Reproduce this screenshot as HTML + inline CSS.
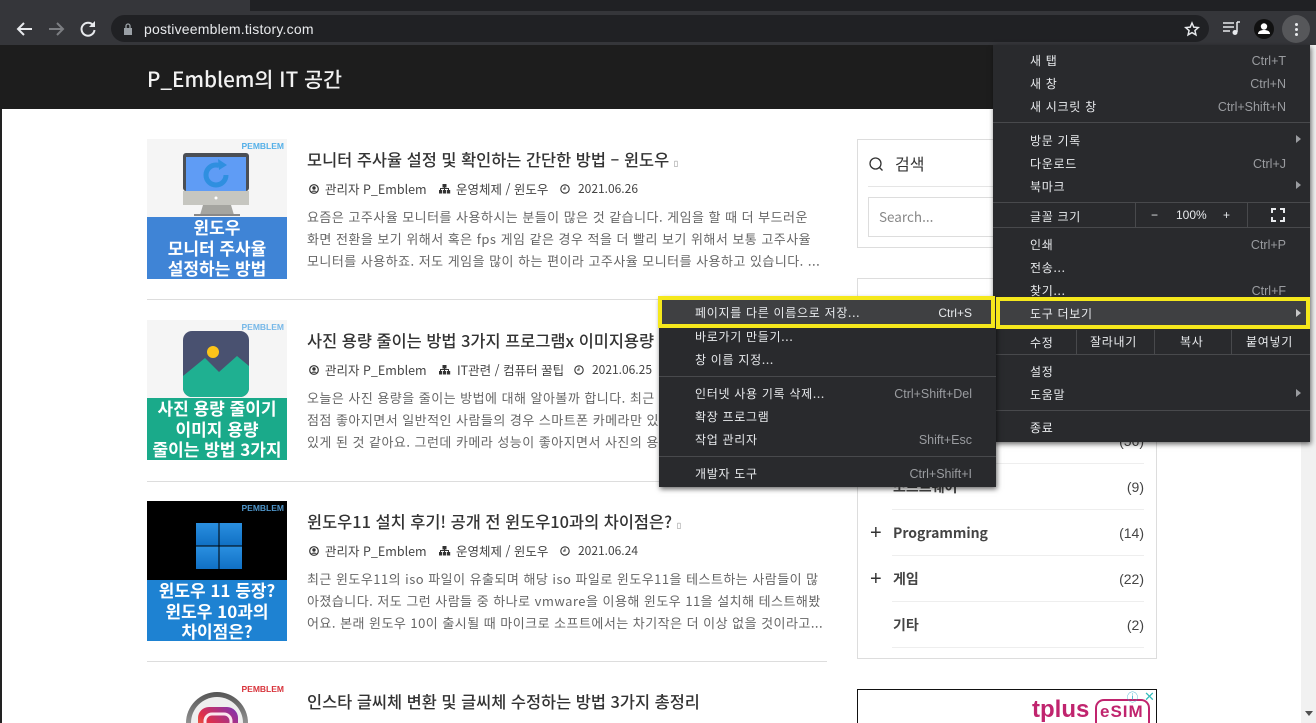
<!DOCTYPE html>
<html lang="ko"><head><meta charset="utf-8"><title>P_Emblem의 IT 공간</title>
<style>
html,body{margin:0;padding:0;width:1316px;height:723px;overflow:hidden;background:#fff}
body{position:relative;font-family:"Liberation Sans","Noto Sans CJK KR",sans-serif;color:#333}
*{box-sizing:border-box}
.a{position:absolute}
.t{position:absolute;white-space:nowrap;line-height:20px;height:20px}
.h{font-family:"Noto Sans CJK KR","Liberation Sans",sans-serif}
.ti{font-size:16.4px;color:#333;font-weight:500;left:307px}
.m{font-size:12.5px;color:#444}
.dt{font-size:12px;color:#444}
.d{font-size:13px;color:#666;left:307px;letter-spacing:.47px}
.r{text-align:right}
.mi{font-size:12px;color:#e8eaed;letter-spacing:.7px}
.sc{font-size:12.5px;color:#9a9ca0;text-align:right}
.sep{position:absolute;height:1px;background:#48494c}
.thumb{position:absolute;left:147px;width:140px;height:140px;overflow:hidden}
.band{position:absolute;left:0;width:140px;overflow:hidden;text-align:center;color:#fff;font-weight:700;font-size:17px;line-height:20.5px;font-family:"Noto Sans CJK KR",sans-serif;white-space:nowrap}
.band div{height:20.5px;line-height:20.5px}
.pb{position:absolute;right:3px;top:2px;font-size:8.5px;font-weight:700;line-height:10px;color:#55b0e8}
.line{position:absolute;left:147px;width:680px;height:1px;background:#ddd}
.cat{position:absolute;left:893px;font-size:14px;font-weight:700;color:#444;line-height:20px;font-family:"Noto Sans CJK KR","Liberation Sans",sans-serif}
.cnt{position:absolute;right:172px;font-size:14px;color:#444;line-height:20px}
.dv{position:absolute;left:892px;width:252px;height:1px;background:#eee}
.tri{position:absolute;left:1296px;width:0;height:0;border-left:5px solid #9a9ca0;border-top:4px solid transparent;border-bottom:4px solid transparent}
</style></head><body>

<!-- browser chrome -->
<div class="a" style="left:0;top:0;width:1316px;height:11px;background:#202124"></div>
<div class="a" style="left:0;top:0;width:250px;height:11px;background:#35363a"></div>
<div class="a" style="left:0;top:11px;width:1316px;height:34px;background:#35363a"></div>
<div class="a" style="left:111px;top:15px;width:1098px;height:27px;border-radius:14px;background:#202124"></div>
<svg class="a" style="left:14px;top:18px" width="85" height="22" viewBox="0 0 85 22" fill="none">
<path d="M18 11H4M10 5l-6 6 6 6" stroke="#e8eaed" stroke-width="2"/>
<path d="M35 11h14M43 5l6 6-6 6" stroke="#7c7e82" stroke-width="2"/>
<path d="M79 7a6.5 6.5 0 1 0 1.5 5" stroke="#e8eaed" stroke-width="2"/><path d="M81 3v6h-6z" fill="#e8eaed"/>
</svg>
<svg class="a" style="left:122px;top:23px" width="12" height="13" viewBox="0 0 12 13"><rect x="2" y="5" width="8" height="7" fill="#9aa0a6"/><path d="M4 5V3a2 2 0 0 1 4 0v2" stroke="#9aa0a6" fill="none" stroke-width="1.3"/></svg>
<div class="t" style="left:144px;top:19px;font-size:14px;color:#e8eaed;letter-spacing:.2px">postiveemblem.tistory.com</div>
<svg class="a" style="left:1184px;top:21px" width="16" height="16" viewBox="0 0 24 24"><path d="M12 3l2.7 6.2 6.8.6-5.1 4.5 1.5 6.6L12 17.4l-5.9 3.5 1.5-6.6L2.500 9.800l6.800-.6z" fill="none" stroke="#e8eaed" stroke-width="2.200"/></svg>
<svg class="a" style="left:1223px;top:21px" width="17" height="15" viewBox="0 0 17 15" fill="none"><path d="M0 2h11M0 6h11M0 10h7" stroke="#e8eaed" stroke-width="1.500"/><path d="M14 1v10" stroke="#e8eaed" stroke-width="1.500"/><circle cx="12" cy="11.500" r="2.500" fill="#e8eaed"/><path d="M14 1h3" stroke="#e8eaed" stroke-width="1.500"/></svg>
<div class="a" style="left:1254px;top:19px;width:20px;height:20px;border-radius:50%;background:#111"></div>
<svg class="a" style="left:1254px;top:19px" width="20" height="20" viewBox="0 0 20 20"><circle cx="10" cy="7.500" r="3.200" fill="#fff"/><path d="M4 15c0-3 3-4 6-4s6 1 6 4z" fill="#fff"/></svg>
<div class="a" style="left:1282px;top:15px;width:28px;height:28px;border-radius:50%;background:#56575a"></div>
<div class="a" style="left:1295px;top:23px;width:3px;height:3px;border-radius:50%;background:#e8eaed;box-shadow:0 5px 0 #e8eaed,0 10px 0 #e8eaed"></div>

<!-- page header -->
<div class="a" style="left:0;top:45px;width:1316px;height:64px;background:#1d1d1d"></div>
<div class="a" style="left:0;top:109px;width:2px;height:614px;background:#222"></div>
<div class="t h" style="left:147px;top:68px;font-size:20.7px;font-weight:500;color:#f2f2f2">P_Emblem의 IT 공간</div>
<div class="a" style="left:1301px;top:45px;width:15px;height:678px;background:#f1f1f1"></div>
<svg class="a" style="left:1305px;top:711px" width="9" height="6"><path d="M0 0h8l-4 5z" fill="#505050"/></svg>

<!-- thumbs -->
<div class="thumb" style="top:139px;background:#f5f5f5">
 <div class="pb">PEMBLEM</div>
 <svg class="a" style="left:0;top:0" width="140" height="80" viewBox="0 0 140 80">
  <path d="M56 66h28l3 10H53z" fill="#a5a5a0"/><rect x="47" y="75" width="46" height="2" fill="#888"/>
  <rect x="36" y="14" width="66" height="38" rx="3" fill="#4b4f55"/>
  <rect x="36" y="52" width="66" height="14" fill="#c6c6c0"/>
  <rect x="39" y="18" width="60" height="34" fill="#5f9cf5"/>
  <circle cx="69" cy="36" r="10" fill="none" stroke="#2f8fe0" stroke-width="5" stroke-dasharray="50 13"/>
  <path d="M71 20l9 6-8 5z" fill="#2f8fe0"/>
  <circle cx="69" cy="59" r="1.500" fill="#fff"/>
 </svg>
 <div class="band" style="top:78px;height:62px;background:#3f84d6"><div>윈도우</div><div>모니터 주사율</div><div>설정하는 방법</div></div>
</div>
<div class="thumb" style="top:320px;background:#f5f5f5">
 <div class="pb" style="color:#77b8e8">PEMBLEM</div>
 <svg class="a" style="left:0;top:0" width="140" height="80" viewBox="0 0 140 80">
  <rect x="36" y="11" width="66" height="66" rx="9" fill="#495170"/>
  <path d="M36 56l22-18 14 14 18-16 12 10v22a9 9 0 0 1-9 9H45a9 9 0 0 1-9-9z" fill="#1fb091"/>
  <circle cx="66" cy="32" r="6" fill="#fcc419"/>
 </svg>
 <div class="band" style="top:78px;height:62px;background:#1aaa8a"><div>사진 용량 줄이기</div><div>이미지 용량</div><div>줄이는 방법 3가지</div></div>
</div>
<div class="thumb" style="top:501px;background:#000">
 <div class="pb" style="color:#4e94c8">PEMBLEM</div>
 <svg class="a" style="left:0;top:0" width="140" height="80" viewBox="0 0 140 80"><defs><linearGradient id="wg" x1="0" y1="0" x2="0" y2="1"><stop offset="0" stop-color="#2a8fe0"/><stop offset="1" stop-color="#1070c4"/></linearGradient></defs><rect x="49" y="22" width="22.500" height="22.500" fill="url(#wg)"/><rect x="72.500" y="22" width="22.500" height="22.500" fill="url(#wg)"/><rect x="49" y="45.500" width="22.500" height="22.500" fill="url(#wg)"/><rect x="72.500" y="45.500" width="22.500" height="22.500" fill="url(#wg)"/></svg>
 <div class="band" style="top:79px;height:61px;background:#1e82d2"><div>윈도우 11 등장?</div><div>윈도우 10과의</div><div>차이점은?</div></div>
</div>
<div class="thumb" style="top:682px;background:#fff">
 <div class="pb" style="color:#d8343c">PEMBLEM</div>
 <svg class="a" style="left:0;top:0" width="140" height="41" viewBox="0 0 140 41">
  <defs><linearGradient id="ig" x1="0" y1="1" x2="1" y2="0"><stop offset="0" stop-color="#f5a030"/><stop offset=".45" stop-color="#e0304a"/><stop offset="1" stop-color="#7a34b8"/></linearGradient><linearGradient id="rg" x1="0" y1="0" x2="0" y2="1"><stop offset="0" stop-color="#555"/><stop offset="1" stop-color="#ccc"/></linearGradient></defs>
  <circle cx="70" cy="41" r="31" fill="url(#rg)"/><circle cx="70" cy="41" r="26" fill="#eee"/>
  <rect x="51" y="25" width="40" height="40" rx="11" fill="url(#ig)"/>
  <rect x="58" y="32" width="26" height="26" rx="7" fill="none" stroke="#fbe6ee" stroke-width="3"/>
 </svg>
</div>

<!-- posts -->
<div class="t h ti" style="top:149px">모니터 주사율 설정 및 확인하는 간단한 방법 – 윈도우 <span style="color:#888;font-size:8px">▯</span></div>
<div class="t h ti" style="top:330px">사진 용량 줄이는 방법 3가지 프로그램x 이미지용량 줄이기</div>
<div class="t h ti" style="top:511px">윈도우11 설치 후기! 공개 전 윈도우10과의 차이점은? <span style="color:#888;font-size:8px">▯</span></div>
<div class="t h ti" style="top:691px">인스타 글씨체 변환 및 글씨체 수정하는 방법 3가지 총정리</div>

<svg width="0" height="0" style="position:absolute"><defs>
<g id="u"><circle cx="5" cy="5" r="4.300" fill="none" stroke="#333" stroke-width="1.200"/><circle cx="5" cy="4" r="1.700" fill="#333"/><path d="M2.200 7.800c.5-1.800 5-1.800 5.600 0z" fill="#333"/></g>
<g id="o" fill="#333"><rect x="3.500" y="0" width="4" height="3.500"/><rect x="0" y="6" width="3.200" height="3.500"/><rect x="4" y="6" width="3.200" height="3.500"/><rect x="8" y="6" width="3.200" height="3.500"/><path d="M1.500 6V4.500h8V6M5.500 3v3" stroke="#333" fill="none"/></g>
<g id="c"><circle cx="5" cy="5" r="4.200" fill="none" stroke="#333" stroke-width="1.100"/><path d="M5 2.500V5H3" fill="none" stroke="#333" stroke-width="1"/></g>
</defs></svg>

<svg class="a" style="left:309px;top:184px" width="11" height="11"><use href="#u"/></svg>
<div class="t h m" style="left:325px;top:179px">관리자 P_Emblem</div>
<svg class="a" style="left:439px;top:184px" width="12" height="11"><use href="#o"/></svg>
<div class="t h m" style="left:456px;top:179px">운영체제 / 윈도우</div>
<svg class="a" style="left:560px;top:184px" width="11" height="11"><use href="#c"/></svg>
<div class="t h dt" style="left:578px;top:179px">2021.06.26</div>

<svg class="a" style="left:309px;top:365px" width="11" height="11"><use href="#u"/></svg>
<div class="t h m" style="left:325px;top:360px">관리자 P_Emblem</div>
<svg class="a" style="left:439px;top:365px" width="12" height="11"><use href="#o"/></svg>
<div class="t h m" style="left:457px;top:360px">IT관련 / 컴퓨터 꿀팁</div>
<svg class="a" style="left:574px;top:365px" width="11" height="11"><use href="#c"/></svg>
<div class="t h dt" style="left:592px;top:360px">2021.06.25</div>

<svg class="a" style="left:309px;top:546px" width="11" height="11"><use href="#u"/></svg>
<div class="t h m" style="left:325px;top:541px">관리자 P_Emblem</div>
<svg class="a" style="left:439px;top:546px" width="12" height="11"><use href="#o"/></svg>
<div class="t h m" style="left:456px;top:541px">운영체제 / 윈도우</div>
<svg class="a" style="left:560px;top:546px" width="11" height="11"><use href="#c"/></svg>
<div class="t h dt" style="left:578px;top:541px">2021.06.24</div>

<div class="t h d" style="top:207px">요즘은 고주사율 모니터를 사용하시는 분들이 많은 것 같습니다. 게임을 할 때 더 부드러운</div>
<div class="t h d" style="top:229px">화면 전환을 보기 위해서 혹은 fps 게임 같은 경우 적을 더 빨리 보기 위해서 보통 고주사율</div>
<div class="t h d" style="top:251px">모니터를 사용하죠. 저도 게임을 많이 하는 편이라 고주사율 모니터를 사용하고 있습니다. ...</div>
<div class="t h d" style="top:388px">오늘은 사진 용량을 줄이는 방법에 대해 알아볼까 합니다. 최근</div>
<div class="t h d" style="top:410px">점점 좋아지면서 일반적인 사람들의 경우 스마트폰 카메라만 있</div>
<div class="t h d" style="top:432px">있게 된 것 같아요. 그런데 카메라 성능이 좋아지면서 사진의 용</div>
<div class="t h d" style="top:569px">최근 윈도우11의 iso 파일이 유출되며 해당 iso 파일로 윈도우11을 테스트하는 사람들이 많</div>
<div class="t h d" style="top:591px">아졌습니다. 저도 그런 사람들 중 하나로 vmware을 이용해 윈도우 11을 설치해 테스트해봤</div>
<div class="t h d" style="top:613px">어요. 본래 윈도우 10이 출시될 때 마이크로 소프트에서는 차기작은 더 이상 없을 것이라고...</div>
<div class="line" style="top:299px"></div>
<div class="line" style="top:481px"></div>
<div class="line" style="top:661px"></div>

<!-- sidebar -->
<div class="a" style="left:857px;top:139px;width:300px;height:109px;border:1px solid #ddd"></div>
<svg class="a" style="left:868px;top:156px" width="17" height="17" fill="none"><circle cx="7.500" cy="7.500" r="5.500" stroke="#333" stroke-width="1.300"/><path d="M11.500 11.500l3 3" stroke="#333" stroke-width="1.300"/></svg>
<div class="t h" style="left:895px;top:153px;font-size:16px;color:#333">검색</div>
<div class="a" style="left:868px;top:186px;width:278px;height:1px;background:#e5e5e5"></div>
<div class="a" style="left:868px;top:197px;width:278px;height:40px;border:1px solid #ddd"></div>
<div class="t h" style="left:879px;top:206px;font-size:13.500px;color:#888">Search...</div>
<div class="a" style="left:857px;top:278px;width:300px;height:381px;border:1px solid #ddd"></div>
<div class="cnt" style="top:431px">(56)</div>
<div class="dv" style="top:463px"></div>
<div class="cat" style="top:477px">소프트웨어</div>
<div class="cnt" style="top:477px">(9)</div>
<div class="dv" style="top:509px"></div>
<div class="t" style="left:870px;top:523px;font-size:20px;color:#333">+</div>
<div class="cat" style="top:523px">Programming</div>
<div class="cnt" style="top:523px">(14)</div>
<div class="dv" style="top:555px"></div>
<div class="t" style="left:870px;top:569px;font-size:20px;color:#333">+</div>
<div class="cat" style="top:569px">게임</div>
<div class="cnt" style="top:569px">(22)</div>
<div class="dv" style="top:601px"></div>
<div class="cat" style="top:615px">기타</div>
<div class="cnt" style="top:615px">(2)</div>
<div class="dv" style="top:647px"></div>

<div class="a" style="left:857px;top:689px;width:300px;height:34px;border:1px solid #111;border-bottom:0;background:#fff"></div>
<div class="t" style="left:1032px;top:700px;font-size:24px;font-weight:700;color:#c0246e;letter-spacing:0">tplus</div>
<div class="a" style="left:1095px;top:699px;width:55px;height:24px;border:2px solid #c0246e;border-bottom:0;border-radius:9px 9px 0 0"></div>
<div class="t" style="left:1100px;top:702px;font-size:17px;font-weight:700;color:#c0246e;letter-spacing:1px">eSIM</div>
<div class="t" style="left:1127px;top:688px;font-size:11px;color:#3ac">ⓘ</div>
<div class="t" style="left:1144px;top:687px;font-size:13px;color:#3bb">✕</div>

<!-- main menu -->
<div class="a" style="left:993px;top:45px;width:317px;height:397px;background:#292a2d;box-shadow:1px 2px 5px rgba(0,0,0,.6)"></div>
<div class="t h mi" style="left:1030px;top:51px">새 탭</div><div class="t sc" style="right:30px;top:51px">Ctrl+T</div>
<div class="t h mi" style="left:1030px;top:74px">새 창</div><div class="t sc" style="right:30px;top:74px">Ctrl+N</div>
<div class="t h mi" style="left:1030px;top:97px">새 시크릿 창</div><div class="t sc" style="right:30px;top:97px">Ctrl+Shift+N</div>
<div class="sep" style="left:993px;top:122px;width:317px"></div>
<div class="t h mi" style="left:1030px;top:131px">방문 기록</div><div class="tri" style="top:135px"></div>
<div class="t h mi" style="left:1030px;top:154px">다운로드</div><div class="t sc" style="right:30px;top:154px">Ctrl+J</div>
<div class="t h mi" style="left:1030px;top:177px">북마크</div><div class="tri" style="top:181px"></div>
<div class="sep" style="left:993px;top:202px;width:317px"></div>
<div class="t h mi" style="left:1030px;top:207px">글꼴 크기</div>
<div class="a" style="left:1135px;top:202px;width:1px;height:25px;background:#48494c"></div>
<div class="a" style="left:1247px;top:202px;width:1px;height:25px;background:#48494c"></div>
<div class="t mi" style="left:1151px;top:205px">−</div>
<div class="t mi" style="left:1176px;top:205px;letter-spacing:0">100%</div>
<div class="t mi" style="left:1223px;top:205px">+</div>
<svg class="a" style="left:1271px;top:208px" width="14" height="14" fill="none" stroke="#e8eaed" stroke-width="2"><path d="M1 5V1h4M9 1h4v4M13 9v4H9M5 13H1V9"/></svg>
<div class="sep" style="left:993px;top:227px;width:317px"></div>
<div class="t h mi" style="left:1030px;top:235px">인쇄</div><div class="t sc" style="right:30px;top:235px">Ctrl+P</div>
<div class="t h mi" style="left:1030px;top:258px">전송...</div>
<div class="t h mi" style="left:1030px;top:281px">찾기...</div><div class="t sc" style="right:30px;top:281px">Ctrl+F</div>
<div class="t h mi" style="left:1030px;top:333px">수정</div>
<div class="a" style="left:1076px;top:330px;width:1px;height:24px;background:#48494c"></div>
<div class="a" style="left:1154px;top:330px;width:1px;height:24px;background:#48494c"></div>
<div class="a" style="left:1231px;top:330px;width:1px;height:24px;background:#48494c"></div>
<div class="t h mi" style="left:1090px;top:332px">잘라내기</div>
<div class="t h mi" style="left:1180px;top:332px">복사</div>
<div class="t h mi" style="left:1246px;top:332px">붙여넣기</div>
<div class="sep" style="left:993px;top:354px;width:317px"></div>
<div class="t h mi" style="left:1030px;top:362px">설정</div>
<div class="t h mi" style="left:1030px;top:385px">도움말</div><div class="tri" style="top:389px"></div>
<div class="sep" style="left:993px;top:410px;width:317px"></div>
<div class="t h mi" style="left:1030px;top:418px">종료</div>

<!-- submenu -->
<div class="a" style="left:659px;top:297px;width:337px;height:190px;background:#292a2d;box-shadow:1px 2px 5px rgba(0,0,0,.6)"></div>
<div class="t h mi" style="left:695px;top:327px">바로가기 만들기...</div>
<div class="t h mi" style="left:695px;top:350px">창 이름 지정...</div>
<div class="sep" style="left:659px;top:376px;width:337px"></div>
<div class="t h mi" style="left:695px;top:384px">인터넷 사용 기록 삭제...</div><div class="t sc" style="right:344px;top:384px">Ctrl+Shift+Del</div>
<div class="t h mi" style="left:695px;top:407px">확장 프로그램</div>
<div class="t h mi" style="left:695px;top:430px">작업 관리자</div><div class="t sc" style="right:344px;top:430px">Shift+Esc</div>
<div class="sep" style="left:659px;top:456px;width:337px"></div>
<div class="t h mi" style="left:695px;top:464px">개발자 도구</div><div class="t sc" style="right:344px;top:464px">Ctrl+Shift+I</div>

<!-- highlighted -->
<div class="a" style="left:658px;top:296px;width:337px;height:32px;border:4px solid #f5e81c;background:#3f4042"></div>
<div class="t h mi" style="left:695px;top:303px">페이지를 다른 이름으로 저장...</div><div class="t" style="right:344px;top:303px;font-size:12px;color:#e8eaed">Ctrl+S</div>
<div class="a" style="left:996px;top:297px;width:314px;height:32px;border:4px solid #f5e81c;background:#3f4042"></div>
<div class="t h mi" style="left:1030px;top:304px">도구 더보기</div><div class="tri" style="top:309px;border-left-color:#c8c8c8"></div>
</body></html>
